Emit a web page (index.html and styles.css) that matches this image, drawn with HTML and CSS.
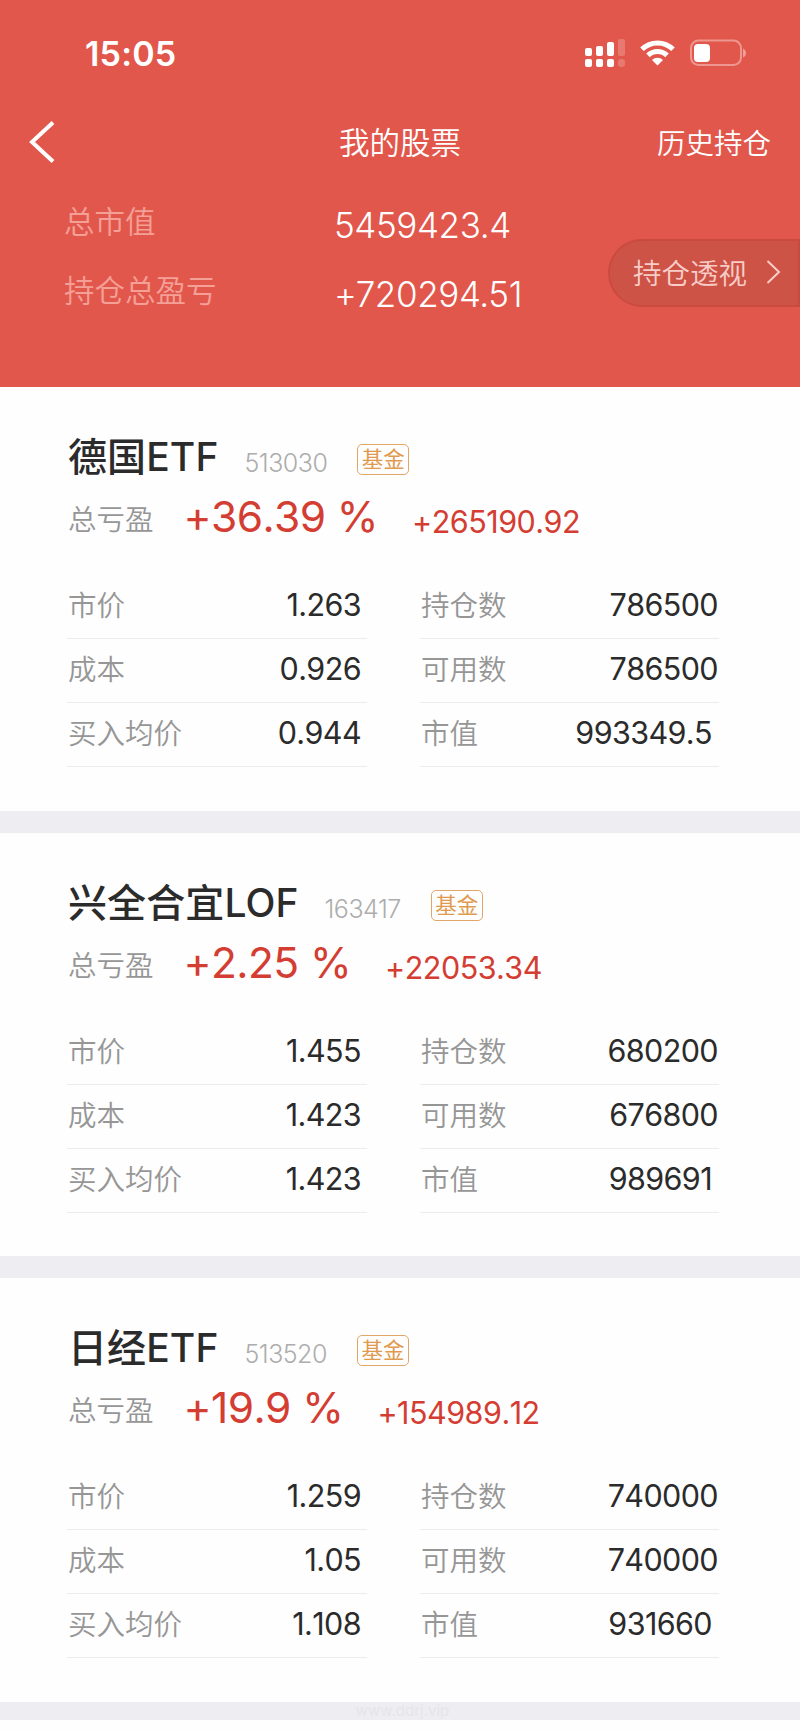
FILE: index.html
```
<!DOCTYPE html>
<html lang="zh-CN">
<head>
    <meta charset="UTF-8">
    <meta name="viewport" content="width=device-width, initial-scale=1.0">
    <title>我的股票</title>
    <link rel="stylesheet" href="styles.css">
</head>
<body>

    <header class="header">
        <div class="status-bar">
            <div class="time">15:05</div>
            <div class="status-icons">
                <svg class="signal" width="40" height="28" viewBox="0 0 40 28" fill="#fff">
                    <rect x="0" y="9" width="7" height="8" rx="2"/>
                    <rect x="11" y="7" width="7" height="10" rx="2"/>
                    <rect x="22" y="3" width="7" height="14" rx="2"/>
                    <rect x="0" y="20" width="7" height="8" rx="2"/>
                    <rect x="11" y="20" width="7" height="8" rx="2"/>
                    <rect x="22" y="20" width="7" height="8" rx="2"/>
                    <g opacity="0.2">
                        <rect x="33" y="0" width="7" height="17" rx="2"/>
                        <rect x="33" y="20" width="7" height="8" rx="3"/>
                    </g>
                </svg>
                <svg class="wifi" width="35" height="26" viewBox="0 0 35 26" fill="none" stroke="#fff" stroke-width="5">
                    <path d="M2 9.3 A22 22 0 0 1 33 9.3"/>
                    <path d="M8 15.4 A13.5 13.5 0 0 1 27 15.4"/>
                    <path d="M17.5 25.5 L12 20 A7.8 7.8 0 0 1 23 20 Z" fill="#fff" stroke="none"/>
                </svg>
                <svg class="battery" width="57" height="28" viewBox="0 0 57 28">
                    <rect x="1" y="1.5" width="50" height="24.5" rx="7.5" fill="none" stroke="#fff" stroke-opacity="0.38" stroke-width="2"/>
                    <rect x="4" y="5" width="16" height="18" rx="4" fill="#fff"/>
                    <path d="M53 9.5 Q56 11 56 14 Q56 17 53 18.5 Z" fill="#fff" fill-opacity="0.42"/>
                </svg>
            </div>
        </div>

        <div class="nav">
            <svg class="back" width="26" height="42" viewBox="0 0 26 42" fill="none" stroke="#fff" stroke-width="4">
                <path d="M24 1.5 L3 21 L24 40.5"/>
            </svg>
            <div class="nav-title">我的股票</div>
            <div class="nav-link">历史持仓</div>
        </div>

        <div class="summary">
            <div class="summary-row">
                <span class="summary-label">总市值</span>
                <span class="summary-value">5459423.4</span>
            </div>
            <div class="summary-row">
                <span class="summary-label">持仓总盈亏</span>
                <span class="summary-value">+720294.51</span>
            </div>
            <div class="insight">
                <span>持仓透视</span>
                <svg width="15" height="24" viewBox="0 0 15 24" fill="none" stroke="#f9cdc7" stroke-width="2">
                    <path d="M1.5 1 L13 12 L1.5 23"/>
                </svg>
            </div>
        </div>
    </header>

    <main>
        <section class="card">
            <div class="card-head">
                <span class="name">德国ETF</span>
                <span class="code">513030</span>
                <span class="tag">基金</span>
            </div>
            <div class="profit">
                <span class="profit-label">总亏盈</span>
                <span class="percent">+36.39 %</span>
                <span class="amount">+265190.92</span>
            </div>
            <div class="details">
                <div class="item"><span>市价</span><b>1.263</b></div>
                <div class="item"><span>持仓数</span><b>786500</b></div>
                <div class="item"><span>成本</span><b>0.926</b></div>
                <div class="item"><span>可用数</span><b>786500</b></div>
                <div class="item"><span>买入均价</span><b>0.944</b></div>
                <div class="item worth"><span>市值</span><b>993349.5</b></div>
            </div>
        </section>

        <section class="card">
            <div class="card-head">
                <span class="name">兴全合宜LOF</span>
                <span class="code">163417</span>
                <span class="tag">基金</span>
            </div>
            <div class="profit">
                <span class="profit-label">总亏盈</span>
                <span class="percent">+2.25 %</span>
                <span class="amount">+22053.34</span>
            </div>
            <div class="details">
                <div class="item"><span>市价</span><b>1.455</b></div>
                <div class="item"><span>持仓数</span><b>680200</b></div>
                <div class="item"><span>成本</span><b>1.423</b></div>
                <div class="item"><span>可用数</span><b>676800</b></div>
                <div class="item"><span>买入均价</span><b>1.423</b></div>
                <div class="item worth"><span>市值</span><b>989691</b></div>
            </div>
        </section>

        <section class="card">
            <div class="card-head">
                <span class="name">日经ETF</span>
                <span class="code">513520</span>
                <span class="tag">基金</span>
            </div>
            <div class="profit">
                <span class="profit-label">总亏盈</span>
                <span class="percent">+19.9 %</span>
                <span class="amount">+154989.12</span>
            </div>
            <div class="details">
                <div class="item"><span>市价</span><b>1.259</b></div>
                <div class="item"><span>持仓数</span><b>740000</b></div>
                <div class="item"><span>成本</span><b>1.05</b></div>
                <div class="item"><span>可用数</span><b>740000</b></div>
                <div class="item"><span>买入均价</span><b>1.108</b></div>
                <div class="item worth"><span>市值</span><b>931660</b></div>
            </div>
        </section>
    </main>

    <footer class="site">www.ddrj.vip</footer>

</body>
</html>
```
FILE: styles.css
```
* {
    box-sizing: border-box;
}

body {
    margin: 0;
    background-color: #fefefe;
    color: #2b2b2b;
    font-family: Inter, "Noto Sans CJK SC", sans-serif;
    font-weight: 400;
    overflow: hidden;
}

.header {
    height: 387px;
    background-color: #e2574c;
    color: #fff;
}

.status-bar {
    display: flex;
    justify-content: space-between;
    height: 107px;
    padding: 0 53px 0 85px;
}

.time {
    font-size: 34px;
    font-weight: 600;
    line-height: 107px;
    letter-spacing: 0.2px;
}

.status-icons {
    display: flex;
    align-items: flex-start;
    padding-top: 39px;
}

.wifi {
    margin: 1px 0 0 15px;
}

.battery {
    margin-left: 15px;
}

.nav {
    display: grid;
    grid-template-columns: 1fr auto 1fr;
    align-items: center;
    height: 70px;
    padding: 0 29px;
    font-weight: 350;
}

.nav-title {
    font-size: 30.5px;
}

.nav-link {
    font-size: 28.5px;
    text-align: right;
}

.nav-title,
.nav-link {
    padding-bottom: 2px;
}

.summary {
    position: relative;
    padding: 15px 0 0 64px;
}

.summary-row {
    display: flex;
    height: 68.5px;
}

.summary-label {
    width: 270px;
    font-size: 30.5px;
    font-weight: 350;
    line-height: 59px;
    color: #f4a097;
}

.summary-value {
    font-size: 35px;
    font-weight: 350;
    line-height: 67px;
    letter-spacing: -0.4px;
}

/* pill on the right edge, over the totals */
.insight {
    position: absolute;
    top: 62px;
    right: 0;
    display: flex;
    align-items: center;
    gap: 19px;
    width: 192px;
    height: 68px;
    padding: 0 0 2px 23px;
    border: 2px solid #cb4a40;
    border-radius: 34px 0 0 34px;
    background-color: #cd5347;
    color: #f9cdc7;
    font-size: 28.5px;
    font-weight: 350;
}

.insight span {
    padding-bottom: 2px;
}

.card {
    height: 445.6px;
    padding: 42px 81px 0 68px;
    border-bottom: 22px solid #eeedf2;
}

.card-head {
    display: flex;
    height: 56px;
    line-height: 56px;
}

.name {
    font-size: 39px;
    font-weight: 500;
    letter-spacing: 0.1px;
}

.code {
    margin-left: 26px;
    padding-top: 6px;
    font-size: 25px;
    font-weight: 300;
    letter-spacing: -0.5px;
    color: #adadad;
}

.tag {
    width: 52px;
    height: 31px;
    margin: 15px 0 0 30px;
    border: 1.5px solid #e2a766;
    border-radius: 5px;
    font-size: 21.5px;
    line-height: 29px;
    text-align: center;
    color: #e09a50;
}

.profit {
    display: flex;
    height: 66px;
    color: #d43d32;
}

.profit-label {
    font-size: 28.5px;
    font-weight: 350;
    line-height: 69px;
    color: #969696;
}

.percent {
    margin-left: 30px;
    font-size: 42.5px;
    font-kerning: none;
    line-height: 64px;
    letter-spacing: -0.6px;
}

.amount {
    margin-left: 34px;
    font-size: 30.5px;
    font-kerning: none;
    line-height: 74px;
    letter-spacing: -0.5px;
}

.details {
    display: grid;
    grid-template-columns: 300px 299px;
    column-gap: 53px;
    margin-left: -1px;
    padding-top: 24px;
}

.item {
    display: flex;
    justify-content: space-between;
    height: 64px;
    padding: 0 6px 0 1px;
    border-bottom: 1px solid #ececec;
    line-height: 59px;
}

.item:nth-child(even) {
    padding-right: 1px;
}

.item.worth {
    padding-right: 7px;
}

.item span {
    font-size: 28.5px;
    font-weight: 350;
    line-height: 61px;
    color: #969696;
}

.item b {
    font-size: 30.5px;
    font-weight: 400;
    font-kerning: none;
    letter-spacing: -0.6px;
}

.site {
    margin-top: -22px;
    padding-left: 5px;
    font-size: 15px;
    line-height: 18px;
    text-align: center;
    color: #e6e5ea;
}
```
